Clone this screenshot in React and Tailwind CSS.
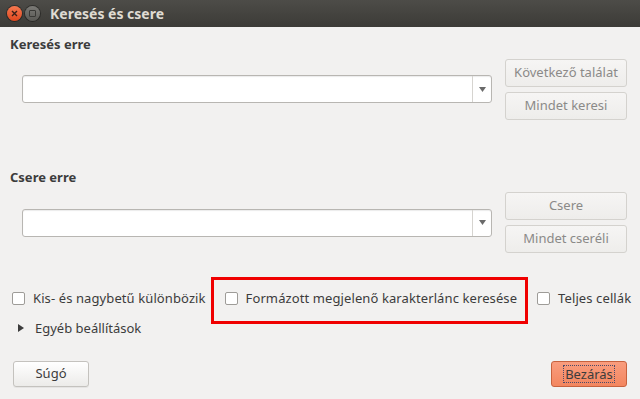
import React from "react";

const font = { fontFamily: '"Noto Sans", "Open Sans", sans-serif' };

function Combo() {
  return (
    <div className="flex h-[28px] w-[470px] rounded-[3px] border border-[#b8b6b2] bg-white shadow-[inset_0_1px_1px_rgba(0,0,0,0.08)]">
      <div className="flex-1" />
      <div className="flex w-[19px] items-center justify-center border-l border-[#d6d4d0]">
        <svg width="7" height="5" viewBox="0 0 7 5">
          <path d="M0 0 H7 L3.5 5 Z" fill="#6a6a6a" />
        </svg>
      </div>
    </div>
  );
}

function GreyButton({ children, className = "" }) {
  return (
    <div
      className={
        "flex h-[28px] w-[122px] items-center justify-center rounded-[3px] border border-[#d4d2ce] bg-gradient-to-b from-[#f6f5f4] to-[#eeedeb] text-[13px] text-[#8b8a88] " +
        className
      }
    >
      {children}
    </div>
  );
}

function Check({ label }) {
  return (
    <div className="flex shrink-0 items-center whitespace-nowrap">
      <div className="h-[13px] w-[13px] shrink-0 rounded-[2px] border border-[#9e9c98] bg-white" />
      <span className="ml-[8px] whitespace-nowrap text-[13px] tracking-[0.1px] text-[#3c3c3c]">{label}</span>
    </div>
  );
}

export default function App() {
  return (
    <div className="flex h-[399px] w-[640px] flex-col overflow-hidden bg-[#f2f1f0]" style={font}>
      <div className="flex h-[27px] shrink-0 items-center bg-gradient-to-b from-[#4d4c48] to-[#3c3b37] pl-[7px]">
        <div className="flex h-[15px] w-[15px] items-center justify-center rounded-full bg-gradient-to-b from-[#f5784f] to-[#e0461c] shadow-[0_0_0_1px_rgba(0,0,0,0.35)]">
          <svg width="7" height="7" viewBox="0 0 7 7">
            <path d="M1 1 L6 6 M6 1 L1 6" stroke="#3a2018" strokeWidth="1.4" />
          </svg>
        </div>
        <div className="ml-[3px] flex h-[15px] w-[15px] items-center justify-center rounded-full bg-gradient-to-b from-[#7b7a76] to-[#5a5955] shadow-[0_0_0_1px_rgba(0,0,0,0.35)]">
          <div className="h-[7px] w-[7px] rounded-[1px] border border-[#3a3936]" />
        </div>
        <span className="ml-[10px] text-[14px] font-bold text-[#dfdbd2]">Keresés és csere</span>
      </div>

      <div className="flex flex-1 flex-col px-[10px]">
        <div className="mt-[8px] text-[13px] font-bold text-[#3c3c3c]">Keresés erre</div>
        <div className="mt-[4px] flex items-center">
          <div className="ml-[12px]">
            <Combo />
          </div>
          <div className="ml-[13px] flex flex-col gap-[5px]">
            <GreyButton>Következő találat</GreyButton>
            <GreyButton>Mindet keresi</GreyButton>
          </div>
        </div>

        <div className="mt-[48px] text-[13px] font-bold text-[#3c3c3c]">Csere erre</div>
        <div className="mt-[5px] flex items-center">
          <div className="ml-[12px]">
            <Combo />
          </div>
          <div className="ml-[13px] flex flex-col gap-[5px]">
            <GreyButton>Csere</GreyButton>
            <GreyButton>Mindet cseréli</GreyButton>
          </div>
        </div>

        <div className="mt-[36px] flex items-center whitespace-nowrap">
          <div className="ml-[2px] shrink-0">
            <Check label="Kis- és nagybetű különbözik" />
          </div>
          <div className="relative ml-[19px] shrink-0">
            <Check label="Formázott megjelenő karakterlánc keresése" />
            <div className="pointer-events-none absolute left-[-14px] right-[-11px] top-[-12px] bottom-[-15px] border-[3px] border-[#f00000]" />
          </div>
          <div className="ml-[20px] shrink-0">
            <Check label="Teljes cellák" />
          </div>
        </div>

        <div className="mt-[10px] flex items-center pl-[8px]">
          <svg width="6" height="8" viewBox="0 0 6 8">
            <path d="M0 0 L6 4 L0 8 Z" fill="#3c3c3c" />
          </svg>
          <span className="ml-[11px] text-[13px] text-[#3c3c3c]">Egyéb beállítások</span>
        </div>

        <div className="mt-[23px] flex items-center justify-between pl-[3px] pr-[3px]">
          <div className="flex h-[26px] w-[76px] items-center justify-center rounded-[3px] border border-[#c4c2be] bg-gradient-to-b from-[#ffffff] to-[#ecebe9] text-[13px] text-[#3c3c3c] shadow-[0_1px_0_rgba(0,0,0,0.05)]">
            Súgó
          </div>
          <div className="flex h-[26px] w-[76px] items-center justify-center rounded-[3px] border border-[#c8623e] bg-gradient-to-b from-[#f99d7e] to-[#f3865f] text-[13px] text-[#3c3c3c]">
            <span className="border border-dotted border-[#4a4a6a] px-[1px] leading-[16px]">Bezárás</span>
          </div>
        </div>
      </div>
    </div>
  );
}
